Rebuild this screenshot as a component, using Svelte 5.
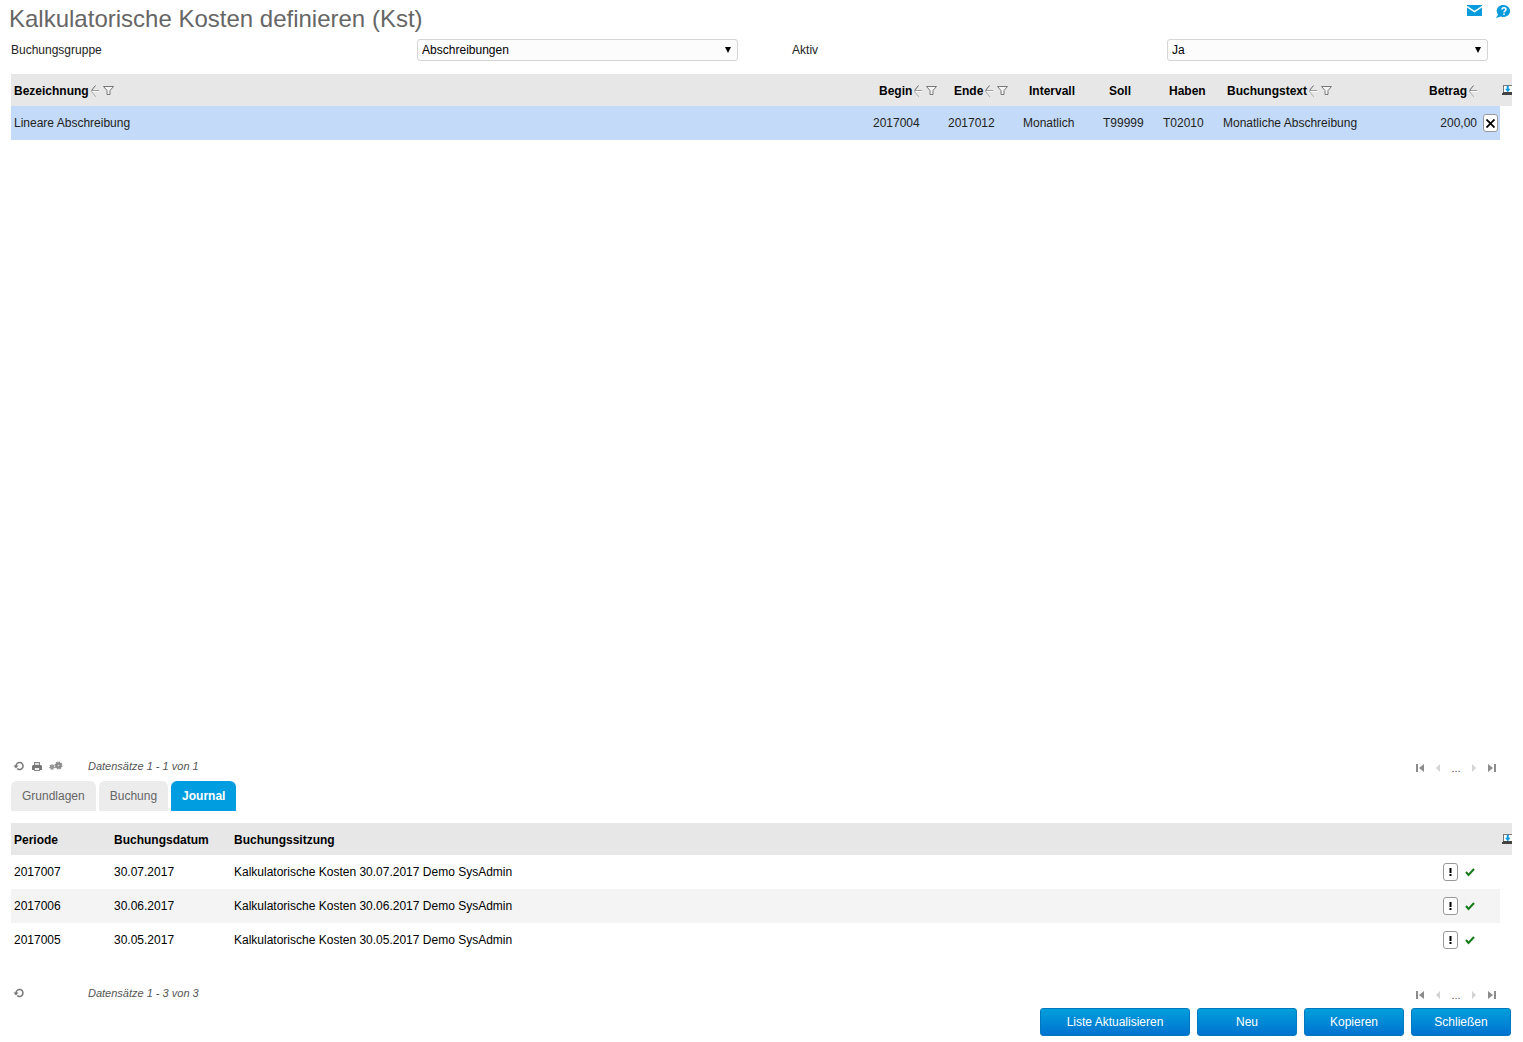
<!-- /kalkulatorische-kosten -->
<script>
    let gruppe = "Abschreibungen"
    let aktiv = "Ja"
    let activeTab = "Journal"

    const tabs = ["Grundlagen", "Buchung", "Journal"]

    const columns = [
        { name: "Bezeichnung", cls: "bezeichnung", sort: true, filter: true },
        { name: "Begin", cls: "datum", sort: true, filter: true },
        { name: "Ende", cls: "datum", sort: true, filter: true },
        { name: "Intervall", cls: "intervall" },
        { name: "Soll", cls: "konto" },
        { name: "Haben", cls: "konto" },
        { name: "Buchungstext", cls: "text", sort: true, filter: true },
        { name: "Betrag", cls: "betrag", sort: true }
    ]

    let kosten = [
        {
            bezeichnung: "Lineare Abschreibung",
            begin: "2017004",
            ende: "2017012",
            intervall: "Monatlich",
            soll: "T99999",
            haben: "T02010",
            text: "Monatliche Abschreibung",
            betrag: "200,00"
        }
    ]

    let journal = [
        { periode: "2017007", datum: "30.07.2017", sitzung: "Kalkulatorische Kosten 30.07.2017 Demo SysAdmin" },
        { periode: "2017006", datum: "30.06.2017", sitzung: "Kalkulatorische Kosten 30.06.2017 Demo SysAdmin" },
        { periode: "2017005", datum: "30.05.2017", sitzung: "Kalkulatorische Kosten 30.05.2017 Demo SysAdmin" }
    ]
</script>

{#snippet exportIcon()}
    <button class="icon export" aria-label="Exportieren">
        <svg width="10" height="11" viewBox="0 0 10 11">
            <path d="M1 0h9v8H1z" fill="#777" />
            <path d="M2 1h8v6H2z" fill="#fff" />
            <path d="M1 7h9v1h-9zM0 8h10v2H0z" fill="#444" />
            <path d="M5 1h1.500v3H8L5.800 7 3.500 4H5z" fill="#0a9be0" stroke="#0a9be0" stroke-width="0.500" />
        </svg>
    </button>
{/snippet}

{#snippet refreshIcon()}
    <button class="icon tool" aria-label="Aktualisieren">
        <svg width="12" height="10" viewBox="0 0 12 10">
            <path d="M3 5a3.500 3.500 0 1 1 1.200 2.600" fill="none" stroke="#777" stroke-width="1.500" />
            <path d="M0.500 4.500h5L3 7.500z" fill="#777" />
        </svg>
    </button>
{/snippet}

{#snippet pager()}
    <nav class="pager">
        <button class="icon" aria-label="Erste Seite">
            <svg width="8" height="8" viewBox="0 0 8 8"><path d="M0 0h2v8H0zM8 0v8L3 4z" fill="#8c8c8c" /></svg>
        </button>
        <button class="icon" aria-label="Vorherige Seite">
            <svg width="8" height="8" viewBox="0 0 8 8"><path d="M6 0v8L2 4z" fill="#d4d4d4" /></svg>
        </button>
        <span>...</span>
        <button class="icon" aria-label="Nächste Seite">
            <svg width="8" height="8" viewBox="0 0 8 8"><path d="M2 0v8l4-4z" fill="#d4d4d4" /></svg>
        </button>
        <button class="icon" aria-label="Letzte Seite">
            <svg width="8" height="8" viewBox="0 0 8 8"><path d="M6 0h2v8H6zM0 0v8l5-4z" fill="#8c8c8c" /></svg>
        </button>
    </nav>
{/snippet}

<div class="page">
    <header>
        <h1>Kalkulatorische Kosten definieren (Kst)</h1>
        <div class="links">
            <a href="#mail" aria-label="Nachricht">
                <svg width="15" height="11" viewBox="0 0 15 11">
                    <path d="M0 0h15v11H0z" fill="#0a9bdc" />
                    <path d="M0 1.500L7.500 6.500 15 1.500" fill="none" stroke="#fff" stroke-width="1.500" />
                </svg>
            </a>
            <a href="#hilfe" aria-label="Hilfe">
                <svg width="15" height="13" viewBox="0 0 15 13">
                    <path d="M8 0a6.500 6 0 1 1-3 11.500L0 13l2-3.500A6.300 6 0 0 1 8 0z" fill="#0a9bdc" />
                    <path d="M6 4.500c0-2.500 4-2.300 4 0C10 6 8 5.800 8 7.500M8 8.500V10" fill="none" stroke="#fff" stroke-width="1.500" />
                </svg>
            </a>
        </div>
    </header>

    <form class="filters">
        <label for="gruppe">Buchungsgruppe</label>
        <div class="select">
            <select id="gruppe" bind:value={gruppe}>
                <option>Abschreibungen</option>
            </select>
            <svg width="6" height="6" viewBox="0 0 6 6"><path d="M0 0h6L3 6z" fill="#000" /></svg>
        </div>
        <label class="second" for="aktiv">Aktiv</label>
        <div class="select">
            <select id="aktiv" bind:value={aktiv}>
                <option>Ja</option>
                <option>Nein</option>
            </select>
            <svg width="6" height="6" viewBox="0 0 6 6"><path d="M0 0h6L3 6z" fill="#000" /></svg>
        </div>
    </form>

    <div class="list">
        <table class="kosten">
            <thead>
                <tr>
                    {#each columns as col}
                        <th class={col.cls}>
                            <span class="head">
                                {col.name}
                                {#if col.sort}
                                    <svg class="sort" width="8" height="12" viewBox="0 0 8 12">
                                        <path d="M4.500 0.500L0.500 5.500" fill="none" stroke="#666" />
                                        <path d="M1 5.500h7" stroke="#999" />
                                        <path d="M2 6.500h6" stroke="#fff" />
                                        <path d="M0.500 6.500l4 5" fill="none" stroke="#888" stroke-dasharray="1.500 1" />
                                    </svg>
                                {/if}
                                {#if col.filter}
                                    <svg class="funnel" width="11" height="9" viewBox="0 0 11 9">
                                        <path d="M0.500 0.500h10L7 4.500v4H4v-4z" fill="#f4f4f4" stroke="#777" />
                                    </svg>
                                {/if}
                            </span>
                        </th>
                    {/each}
                    <th class="action"></th>
                    <th class="edge">{@render exportIcon()}</th>
                </tr>
            </thead>
            <tbody>
                {#each kosten as row}
                    <tr class="selected">
                        <td>{row.bezeichnung}</td>
                        <td>{row.begin}</td>
                        <td>{row.ende}</td>
                        <td>{row.intervall}</td>
                        <td>{row.soll}</td>
                        <td>{row.haben}</td>
                        <td>{row.text}</td>
                        <td class="betrag">{row.betrag}</td>
                        <td class="action">
                            <button class="icon box" aria-label="Löschen">
                                <svg width="9" height="9" viewBox="0 0 9 9"><path d="M0.500 0.500l8 8M8.500 0.500l-8 8" stroke="#000" stroke-width="1.800" /></svg>
                            </button>
                        </td>
                        <td class="edge"></td>
                    </tr>
                {/each}
            </tbody>
        </table>
    </div>

    <div class="status">
        <div class="tools">
            {@render refreshIcon()}
            <button class="icon tool" aria-label="Drucken">
                <svg width="10" height="9" viewBox="0 0 10 9">
                    <path d="M2 0h6v3H2z" fill="#888" />
                    <path d="M3 1h4v2H3z" fill="#ddd" />
                    <path d="M1 3h8l1 1v4H0V4z" fill="#777" />
                    <path d="M2 6h6v3H2z" fill="#888" />
                    <path d="M3 6h4v2H3z" fill="#eee" />
                </svg>
            </button>
            <button class="icon tool" aria-label="Einstellungen">
                <svg width="14" height="10" viewBox="0 0 14 10">
                    <circle cx="3" cy="6" r="2" fill="#999" stroke="#888" stroke-dasharray="1 0.600" stroke-width="1.500" />
                    <circle cx="9.500" cy="4.500" r="3" fill="#888" stroke="#888" stroke-dasharray="1.500 0.800" stroke-width="2" />
                    <circle cx="9.500" cy="4.500" r="1" fill="#ccc" />
                </svg>
            </button>
        </div>
        <em>Datensätze 1 - 1 von 1</em>
        {@render pager()}
    </div>

    <div class="tabs">
        {#each tabs as tab}
            <button class:active={tab === activeTab} on:click={() => {
                activeTab = tab
            }}>{tab}</button>
        {/each}
    </div>

    <table class="journal">
        <thead>
            <tr>
                <th class="periode">Periode</th>
                <th class="buchungsdatum">Buchungsdatum</th>
                <th>Buchungssitzung</th>
                <th class="state"></th>
                <th class="edge">{@render exportIcon()}</th>
            </tr>
        </thead>
        <tbody>
            {#each journal as row}
                <tr>
                    <td>{row.periode}</td>
                    <td>{row.datum}</td>
                    <td>{row.sitzung}</td>
                    <td class="state">
                        <div>
                            <button class="icon box" aria-label="Hinweis">
                                <svg width="3" height="8" viewBox="0 0 3 8"><path d="M0.500 0h2v5h-2zM0.500 6h2v2h-2z" fill="#000" /></svg>
                            </button>
                            <svg width="10" height="9" viewBox="0 0 10 9"><path d="M1 4L3.500 7 9 1" fill="none" stroke="#157a1a" stroke-width="2" /></svg>
                        </div>
                    </td>
                    <td class="edge"></td>
                </tr>
            {/each}
        </tbody>
    </table>

    <div class="status bottom">
        <div class="tools">
            {@render refreshIcon()}
        </div>
        <em>Datensätze 1 - 3 von 3</em>
        {@render pager()}
    </div>

    <footer>
        <button class="wide">Liste Aktualisieren</button>
        <button>Neu</button>
        <button>Kopieren</button>
        <button>Schließen</button>
    </footer>
</div>

<style>
    :global(body) {
        margin: 0;
        background: #fff;
    }

    .page {
        box-sizing: border-box;
        min-height: 100vh;
        display: flex;
        flex-direction: column;
        padding: 0 11px 6px;
        font: 12px/16px "Liberation Sans", Arial, sans-serif;
        color: #222;
    }

    button, select {
        font: inherit;
    }

    svg {
        display: block;
        flex: none;
    }

    header {
        display: flex;
        justify-content: space-between;
        height: 39px;
    }

    h1 {
        margin: 0 0 0 -2px;
        font-size: 24px;
        line-height: 38px;
        font-weight: normal;
        color: #666;
    }

    .links {
        display: flex;
        gap: 14px;
        padding: 5px 1px 0 0;
    }

    .filters {
        display: grid;
        grid-template-columns: 13fr 321px 54px 12fr 321px 24px;
        align-items: center;
        margin-bottom: 13px;
    }

    .second {
        grid-column: 4;
    }

    .select {
        position: relative;
    }

    .select select {
        display: block;
        width: 100%;
        height: 22px;
        padding: 0 4px;
        border: 1px solid #d5d5d5;
        border-radius: 3px;
        background: #fcfcfc;
        color: #000;
        appearance: none;
    }

    .select svg {
        position: absolute;
        top: 8px;
        right: 7px;
        pointer-events: none;
    }

    .list {
        flex: 1;
    }

    table {
        width: 100%;
        border-collapse: collapse;
        table-layout: fixed;
    }

    th, td {
        box-sizing: border-box;
        padding: 0 3px;
        text-align: left;
        white-space: nowrap;
    }

    th {
        height: 32px;
        padding-top: 1px;
        background: #e7e7e7;
        color: #000;
    }

    td {
        height: 34px;
    }

    .head {
        display: inline-flex;
        align-items: center;
    }

    .sort {
        margin-left: 2px;
    }

    .funnel {
        margin-left: 4px;
    }

    .datum { width: 75px; }
    .intervall { width: 80px; }
    .konto { width: 60px; }
    .text { width: 180px; }
    .betrag { width: 80px; }
    .action { width: 20px; }
    .edge { width: 12px; }

    th.datum, th.intervall, th.konto {
        padding-left: 9px;
        padding-right: 0;
    }

    th.text {
        padding-left: 7px;
    }

    .betrag {
        text-align: right;
    }

    th.edge, td.edge {
        padding: 0 0 0 2px;
    }

    .selected td {
        background: #c3daf9;
    }

    .selected td.edge {
        background: #fff;
    }

    .icon {
        display: flex;
        align-items: center;
        justify-content: center;
        padding: 0;
        border: 0;
        background: none;
    }

    .box {
        box-sizing: border-box;
        width: 15px;
        height: 18px;
        border: 1px solid #999;
        border-radius: 3px;
        background: #fff;
    }

    .status {
        display: flex;
        align-items: center;
        height: 30px;
        color: #555;
        font-size: 11px;
    }

    .status em {
        flex: 1;
    }

    .tools {
        display: flex;
        gap: 1px;
        width: 77px;
    }

    .tool {
        width: 18px;
    }

    .tool:first-child {
        width: 16px;
    }

    .pager {
        display: grid;
        grid-template-columns: repeat(5, 18px);
        align-items: center;
        padding: 3px 11px 0 0;
        text-align: center;
    }

    .tabs {
        display: flex;
        gap: 3px;
        margin-bottom: 12px;
    }

    .tabs button {
        height: 30px;
        padding: 0 11px;
        border: 0;
        border-radius: 6px 6px 0 0;
        background: #ececec;
        color: #666;
    }

    .tabs .active {
        background: #009de0;
        color: #fff;
        font-weight: bold;
    }

    .journal {
        color: #000;
    }

    .periode { width: 100px; }
    .buchungsdatum { width: 120px; }
    .state { width: 60px; }

    .state div {
        display: flex;
        align-items: center;
        gap: 7px;
    }

    .journal tr:nth-child(even) td {
        background: #f4f4f4;
    }

    .journal tr td.edge {
        background: #fff;
    }

    .bottom {
        margin-top: 21px;
    }

    footer {
        display: flex;
        justify-content: flex-end;
        gap: 7px;
        padding-right: 1px;
    }

    footer button {
        width: 100px;
        height: 28px;
        padding: 0;
        border: 1px solid #0078c0;
        border-radius: 3px;
        background: linear-gradient(#009fdb, #0072d0);
        color: #fff;
    }

    footer .wide {
        width: 150px;
    }
</style>
